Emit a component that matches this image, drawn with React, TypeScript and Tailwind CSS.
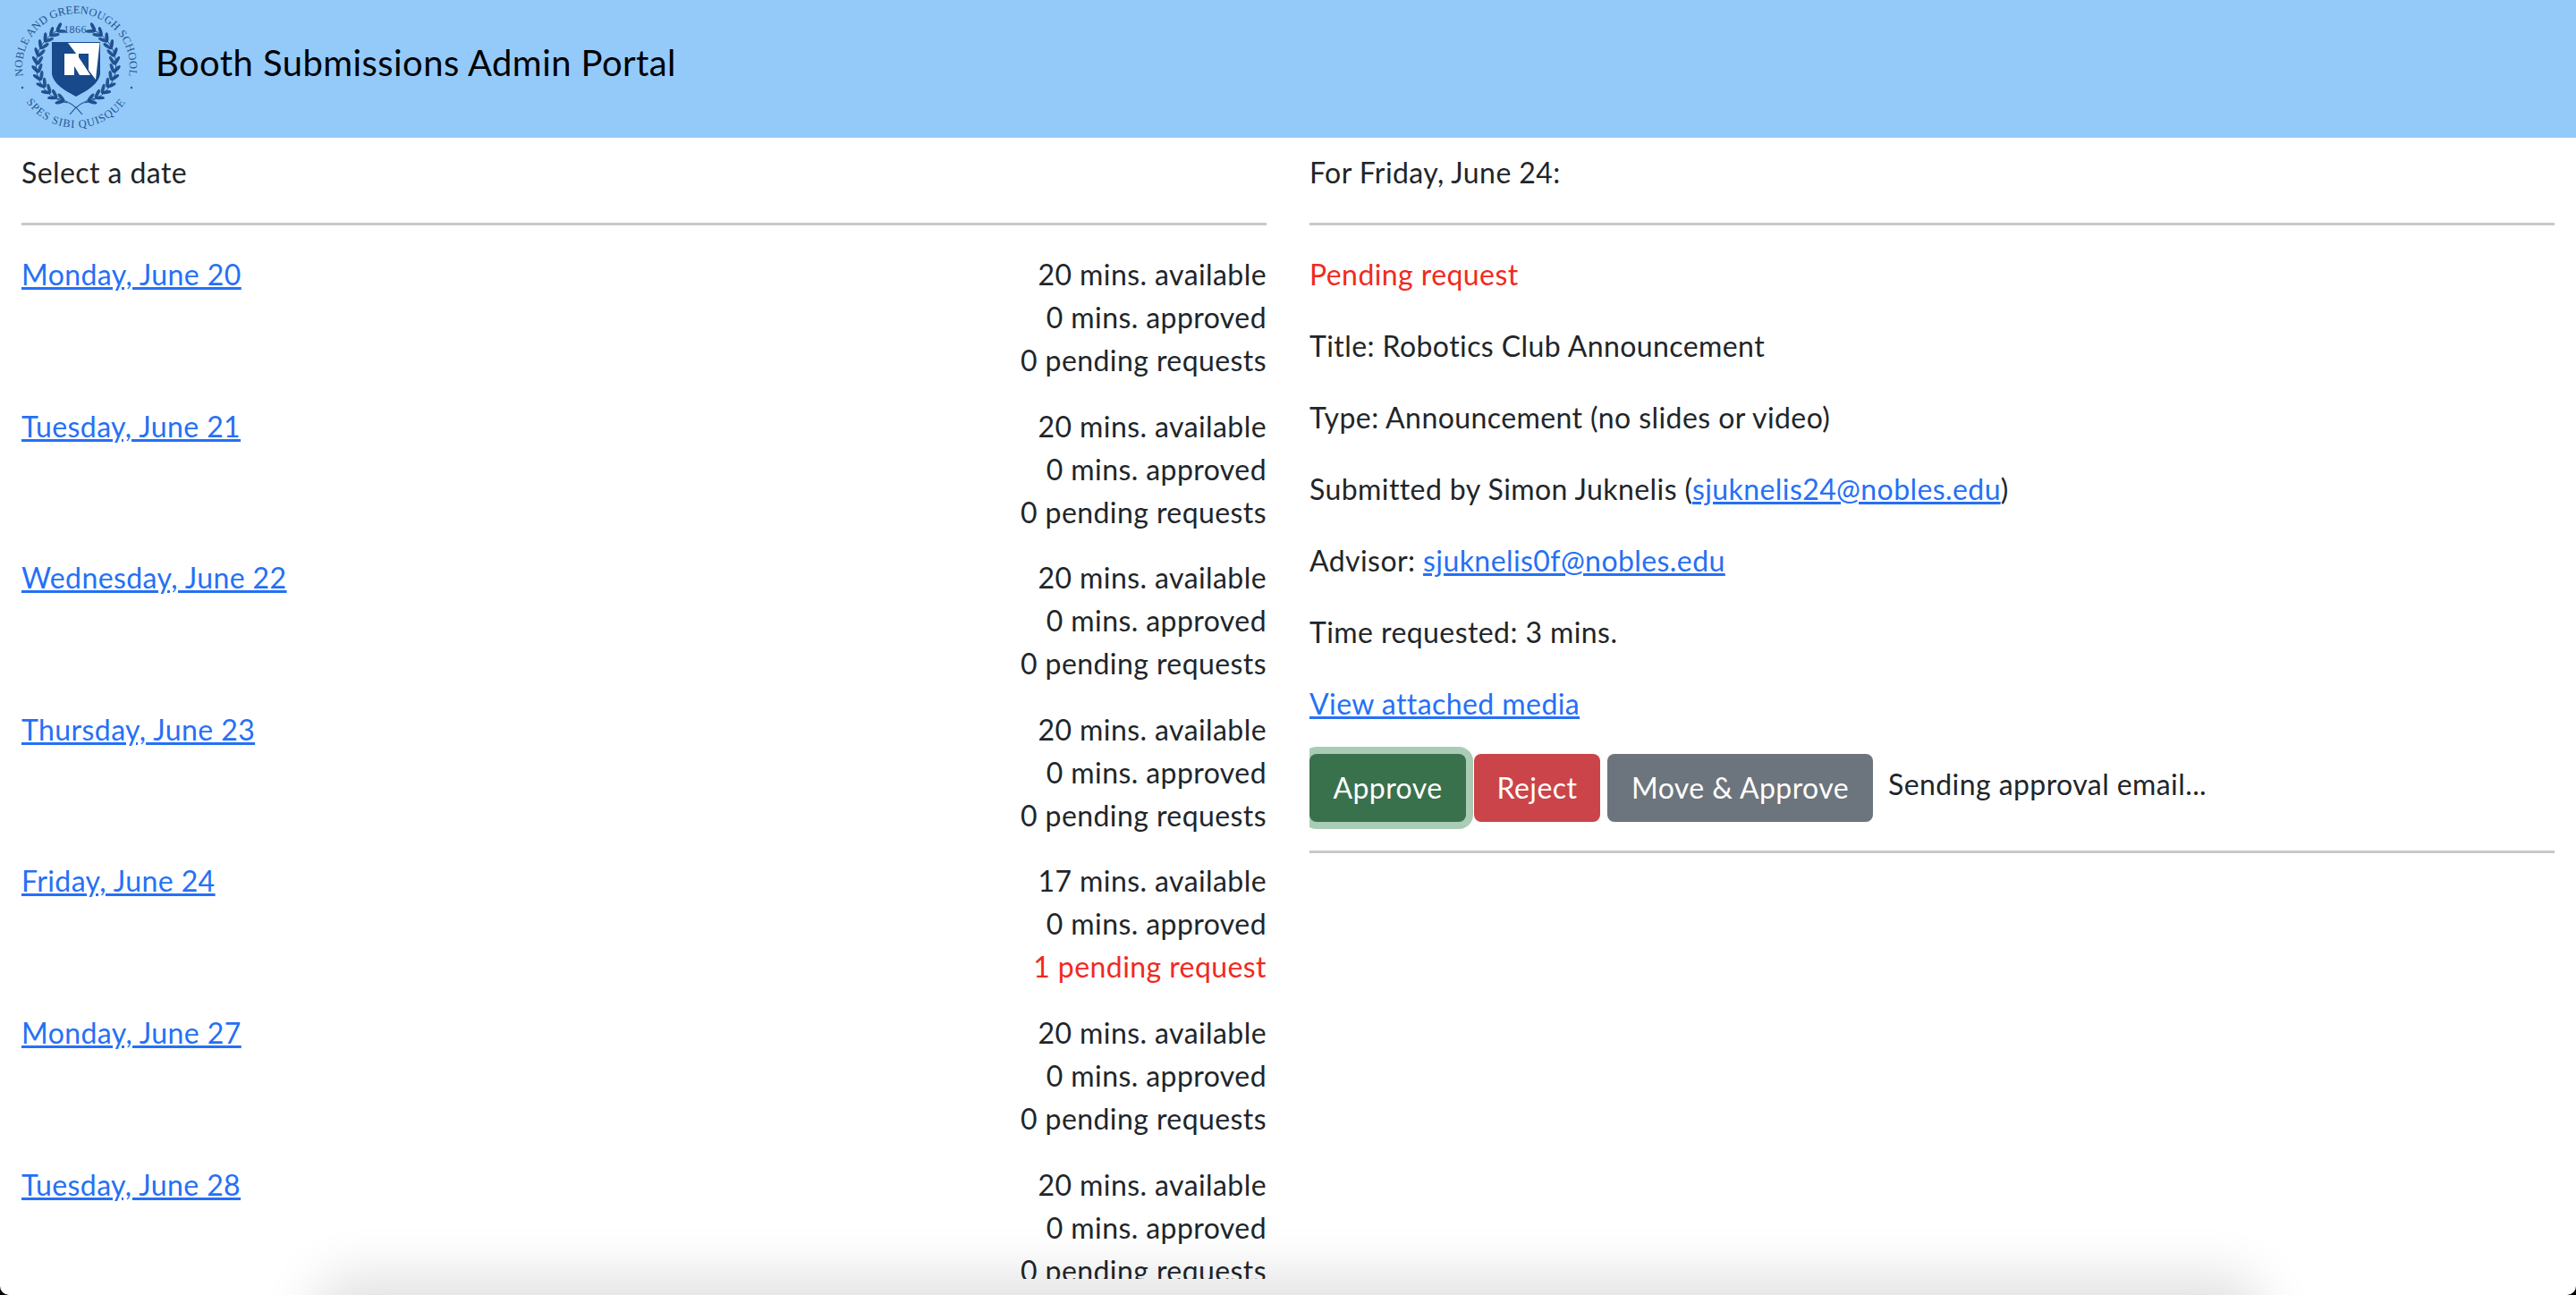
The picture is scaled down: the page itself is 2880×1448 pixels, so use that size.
const dates = [
  { label: "Monday, June 20", available: 20, pending: 0 },
  { label: "Tuesday, June 21", available: 20, pending: 0 },
  { label: "Wednesday, June 22", available: 20, pending: 0 },
  { label: "Thursday, June 23", available: 20, pending: 0 },
  { label: "Friday, June 24", available: 17, pending: 1 },
  { label: "Monday, June 27", available: 20, pending: 0 },
  { label: "Tuesday, June 28", available: 20, pending: 0 },
];

// leaves sit on a circle round the shield, angles in degrees going clockwise from the right
const leafAngles = [108, 120, 132, 144, 156, 168, 180, 192, 204, 216, 228, 240];

function Laurel({ flip }: { flip?: boolean }) {
  return (
    <g transform={flip ? "matrix(-1 0 0 1 170 0)" : undefined}>
      <path d="M75 115A43 43 0 0 1 67 33" fill="none" stroke="#1f4f8f" strokeWidth="1" />
      {leafAngles.map((a) => {
        const rad = (a * Math.PI) / 180;
        const x = 85 + 43 * Math.cos(rad);
        const y = 72 + 43 * Math.sin(rad);
        const dir = a + 90;
        return (
          <g key={a} transform={`translate(${x} ${y})`}>
            <ellipse cx="5" cy="0" rx="5.5" ry="1.9" fill="#24558f" transform={`rotate(${dir + 32})`} />
            <ellipse cx="5" cy="0" rx="5.5" ry="1.9" fill="#1f4f8f" transform={`rotate(${dir - 32})`} />
          </g>
        );
      })}
      <path d="M64 110Q82 114 92 128" fill="none" stroke="#1f4f8f" strokeWidth="1.2" />
    </g>
  );
}

function Logo() {
  return (
    <svg viewBox="0 0 170 154" className="h-[154px] w-[170px] shrink-0">
      <defs>
        <path id="topArc" d="M26.3 87.5A60 60 0 1 1 143.7 87.5" />
        <path id="bottomArc" d="M24 105A68 68 0 0 0 146 105" />
      </defs>
      <text fill="#24558f" fontSize="12.5" fontFamily="'Liberation Serif', serif" letterSpacing="0.1">
        <textPath href="#topArc" startOffset="50%" textAnchor="middle">NOBLE AND GREENOUGH SCHOOL</textPath>
      </text>
      <text fill="#24558f" fontSize="12.5" fontFamily="'Liberation Serif', serif" letterSpacing="1">
        <textPath href="#bottomArc" startOffset="50%" textAnchor="middle">SPES SIBI QUISQUE</textPath>
      </text>
      <text x="84" y="37" textAnchor="middle" fill="#24558f" fontSize="12" fontFamily="'Liberation Serif', serif">1866</text>
      <circle cx="25" cy="98" r="1.2" fill="#24558f" />
      <circle cx="147" cy="98" r="1.2" fill="#24558f" />
      <Laurel />
      <Laurel flip />
      <path d="M58 47H112V83C110 94 98 101 85 108C72 101 60 94 58 83Z" fill="#17498b" />
      <path d="M76 48H111.500L107 89Z" fill="#ffffff" />
      <path d="M72 60H86L101 84H89L83 74V84H72Z" fill="#ffffff" />
      <path d="M88 60H99V80L88 64Z" fill="#17498b" />
    </svg>
  );
}

function Row({ label, available, pending }: (typeof dates)[number]) {
  return (
    <div className="mb-[25.6px] flex justify-between">
      <a href="#" className="text-[#2570f5] underline">{label}</a>
      <div className="text-right">
        <div>{available} mins. available</div>
        <div>0 mins. approved</div>
        {pending > 0 ? (
          <div className="text-[#f02a20]">{pending} pending request</div>
        ) : (
          <div>{pending} pending requests</div>
        )}
      </div>
    </div>
  );
}

export default function App() {
  return (
    <div className="bg-black">
      <div className="relative h-[1448px] overflow-hidden rounded-b-[10px] bg-white font-['Lato','Liberation_Sans',sans-serif] text-[32px] leading-[48px] tracking-[0.42px] text-[#212529]">
        <header className="flex h-[154px] items-center gap-[4px] bg-[#94cafa] text-[40px] text-black">
          <Logo />
          <h1 className="pb-[15px]">Booth Submissions Admin Portal</h1>
        </header>
        <main className="grid grid-cols-2 gap-[48px] px-[24px]">
          <section className="h-[1276px] overflow-hidden">
            <p className="pt-[15px]">Select a date</p>
            <hr className="mt-[32px] mb-[31px] border-t-[3px] border-[#c8c8c8]" />
            {dates.map((d) => (
              <Row key={d.label} {...d} />
            ))}
          </section>
          <section className="overflow-hidden">
            <p className="pt-[15px]">For Friday, June 24:</p>
            <hr className="mt-[32px] mb-[31px] border-t-[3px] border-[#c8c8c8]" />
            <div className="flex flex-col gap-[32px]">
              <p className="text-[#f02a20]">Pending request</p>
              <p>Title: Robotics Club Announcement</p>
              <p>Type: Announcement (no slides or video)</p>
              <p>
                Submitted by Simon Juknelis (
                <a href="#" className="text-[#2570f5] underline">sjuknelis24@nobles.edu</a>)
              </p>
              <p>
                Advisor: <a href="#" className="text-[#2570f5] underline">sjuknelis0f@nobles.edu</a>
              </p>
              <p>Time requested: 3 mins.</p>
              <p><a href="#" className="text-[#2570f5] underline">View attached media</a></p>
            </div>
            <div className="mt-[32px] flex items-start">
              <button className="h-[76px] w-[175px] rounded-[8px] bg-[#39714c] text-white shadow-[0_0_0_8px_#aaccb6]">Approve</button>
              <button className="ml-[9px] h-[76px] w-[141px] rounded-[8px] bg-[#cb444a] text-white">Reject</button>
              <button className="ml-[8px] h-[76px] w-[297px] rounded-[8px] bg-[#6c757d] text-white">Move &amp; Approve</button>
              <span className="ml-[17px] mt-[10px]">Sending approval email...</span>
            </div>
            <hr className="mt-[32px] border-t-[3px] border-[#c8c8c8]" />
          </section>
        </main>
        <div className="absolute inset-x-[370px] bottom-[-50px] h-[50px] rounded-[40px] shadow-[0_0_60px_22px_rgba(0,0,0,0.12)]" />
      </div>
    </div>
  );
}
